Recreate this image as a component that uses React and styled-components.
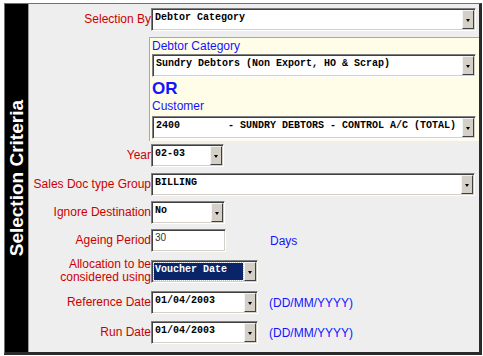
import styled, { createGlobalStyle } from 'styled-components';

const GlobalStyle = createGlobalStyle`
  html, body {
    margin: 0;
    padding: 0;
    background: #ffffff;
  }
  body {
    font-family: "Liberation Sans", Arial, sans-serif;
  }
`;

const Panel = styled.div`
  box-sizing: border-box;
  width: 478px;
  height: 352px;
  margin: 3px 0 0 4px;
  display: flex;
  border-style: solid;
  border-width: 1px 3px 3px 1px;
  border-color: #707070 #2a2a2a #2a2a2a #707070;
  background: #eeeeee;
`;

const Sidebar = styled.div`
  width: 23px;
  flex-shrink: 0;
  background: #000000;
  border-right: 1px solid #9a9a9a;
  display: flex;
  align-items: center;
  justify-content: center;
`;

const SideTitle = styled.div`
  writing-mode: vertical-rl;
  transform: rotate(180deg);
  color: #ffffff;
  font-family: "Liberation Sans", Arial, sans-serif;
  font-weight: bold;
  font-size: 19px;
  line-height: 23px;
  white-space: nowrap;
`;

const Content = styled.div`
  flex: 1;
  display: flex;
  flex-direction: column;
  padding-top: 4px;
  background: #eeeeee;
`;

const Row = styled.div`
  display: flex;
  align-items: center;
  margin-top: ${p => p.$mt || 0}px;
`;

const Label = styled.div`
  width: 122px;
  flex-shrink: 0;
  text-align: right;
  color: #cc0000;
  font-size: 12px;
  line-height: 13px;
`;

const Hint = styled.div`
  margin-left: ${p => p.$ml}px;
  color: #1414ff;
  font-size: 12px;
  line-height: 14px;
`;

const Choice = styled.div`
  margin: 6px 0 0 120px;
  padding: 1px 0 2px 2px;
  background: #fffde8;
  border-top: 1px solid #a8a8a8;
  border-left: 1px solid #a8a8a8;
  display: flex;
  flex-direction: column;
  align-items: flex-start;
`;

const ChoiceTitle = styled.div`
  color: #1414ff;
  font-size: 12px;
  line-height: 14px;
  margin-top: ${p => p.$mt || 0}px;
`;

const OrText = styled.div`
  color: #1414ff;
  font-size: 17px;
  font-weight: bold;
  line-height: 20px;
  margin-top: 2px;
`;

const ComboBox = styled.div`
  box-sizing: border-box;
  width: ${p => p.$w}px;
  height: 23px;
  flex-shrink: 0;
  margin-top: ${p => p.$mt || 0}px;
  display: flex;
  background: #ffffff;
  border: 1px solid;
  border-color: #808080 #ffffff #ffffff #808080;
  box-shadow: inset 1px 1px #404040, inset -1px -1px #d4d0c8;
  padding: 1px;
`;

const ComboValue = styled.div`
  flex: 1;
  margin: ${p => (p.$selected ? '1px' : '0')};
  padding: ${p => (p.$selected ? '1px 0 0 1px' : '2px 0 0 2px')};
  font-family: "Liberation Mono", "Courier New", monospace;
  font-weight: bold;
  font-size: 10px;
  line-height: 12px;
  white-space: pre;
  overflow: hidden;
  color: ${p => (p.$selected ? '#ffffff' : '#000000')};
  background: ${p => (p.$selected ? '#0a246a' : 'transparent')};
  outline: ${p => (p.$selected ? '1px dotted #d8d080' : 'none')};
`;

const ArrowButton = styled.div`
  box-sizing: border-box;
  width: 12px;
  flex-shrink: 0;
  background: #d4d0c8;
  border: 1px solid;
  border-color: #f4f4f4 #404040 #404040 #f4f4f4;
  display: flex;
  align-items: center;
  justify-content: center;

  &::after {
    content: '';
    width: 0;
    height: 0;
    margin-top: 2px;
    border-left: 2.5px solid transparent;
    border-right: 2.5px solid transparent;
    border-top: 3px solid #000000;
  }
`;

const TextBox = styled.div`
  box-sizing: border-box;
  width: ${p => p.$w}px;
  height: 23px;
  flex-shrink: 0;
  background: #ffffff;
  border: 1px solid;
  border-color: #808080 #ffffff #ffffff #808080;
  box-shadow: inset 1px 1px #404040, inset -1px -1px #d4d0c8;
  padding: 2px 0 0 3px;
  font-size: 10px;
  line-height: 11px;
  color: #333333;
`;

const Combo = ({ w, value, selected, mt }) => (
  <ComboBox $w={w} $mt={mt}>
    <ComboValue $selected={selected}>{value}</ComboValue>
    <ArrowButton />
  </ComboBox>
);

const App = () => (
  <>
    <GlobalStyle />
    <Panel>
      <Sidebar>
        <SideTitle>Selection Criteria</SideTitle>
      </Sidebar>
      <Content>
        <Row>
          <Label>Selection By</Label>
          <Combo w={325} value="Debtor Category" />
        </Row>

        <Choice>
          <ChoiceTitle>Debtor Category</ChoiceTitle>
          <Combo w={324} mt={1} value="Sundry Debtors (Non Export, HO & Scrap)" />
          <OrText>OR</OrText>
          <ChoiceTitle>Customer</ChoiceTitle>
          <Combo w={324} mt={3} value="2400        - SUNDRY DEBTORS - CONTROL A/C (TOTAL)" />
        </Choice>

        <Row $mt={3}>
          <Label>Year</Label>
          <Combo w={73} value="02-03" />
        </Row>
        <Row $mt={6}>
          <Label>Sales Doc type Group</Label>
          <Combo w={324} value="BILLING" />
        </Row>
        <Row $mt={5}>
          <Label>Ignore Destination</Label>
          <Combo w={74} value="No" />
        </Row>
        <Row $mt={5}>
          <Label>Ageing Period</Label>
          <TextBox $w={75}>30</TextBox>
          <Hint $ml={44}>Days</Hint>
        </Row>
        <Row $mt={6}>
          <Label>
            Allocation to be
            <br />
            considered using
          </Label>
          <Combo w={107} value="Voucher Date" selected />
        </Row>
        <Row $mt={7}>
          <Label>Reference Date</Label>
          <Combo w={107} value="01/04/2003" />
          <Hint $ml={11}>(DD/MM/YYYY)</Hint>
        </Row>
        <Row $mt={7}>
          <Label>Run Date</Label>
          <Combo w={107} value="01/04/2003" />
          <Hint $ml={11}>(DD/MM/YYYY)</Hint>
        </Row>
      </Content>
    </Panel>
  </>
);

export default App;
